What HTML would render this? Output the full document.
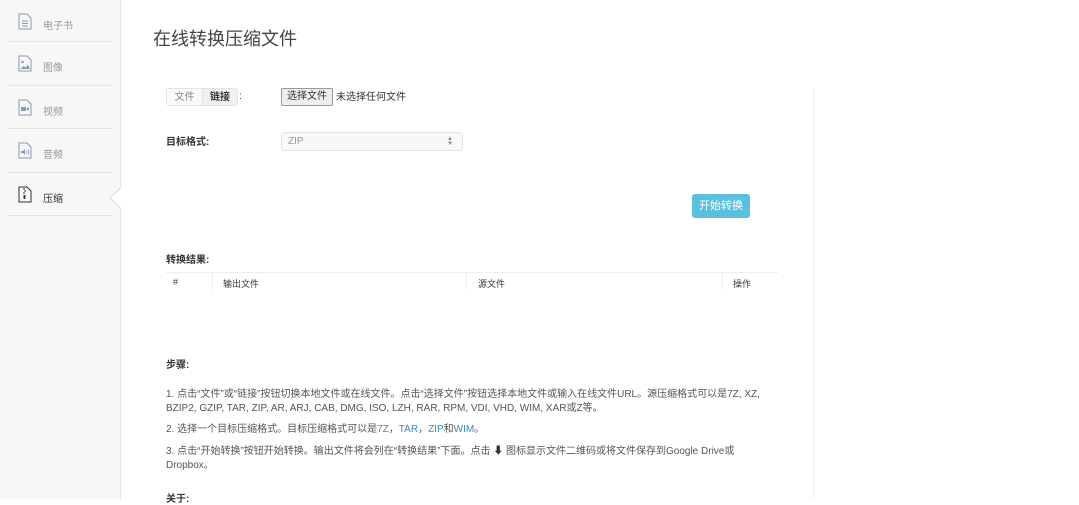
<!DOCTYPE html>
<html><head><meta charset="utf-8"><style>
*{margin:0;padding:0;box-sizing:border-box}
body{width:1079px;height:499px;overflow:hidden;background:#fff;font-family:"Liberation Sans","Noto Sans CJK SC",sans-serif;color:#333;position:relative}
.side{position:absolute;left:0;top:0;width:121px;height:499px;background:#f7f7f7;border-right:1px solid #e8e8e8}
.item{position:absolute;left:8px;width:104px;height:43px;border-bottom:1px solid #e3e3e3;font-size:10px;color:#999}
.item span{position:absolute;left:35px;top:17px}
.item svg{position:absolute;left:10px;top:13px}
.a{position:absolute;font-size:10px}
.arrow{position:absolute;left:113px;top:190px;width:16px;height:16px;background:#fff;border-left:1px solid #ddd;border-bottom:1px solid #ddd;transform:rotate(45deg)}
a{color:#3a8cc2;text-decoration:none}
.p{position:absolute;left:166px;width:598px;line-height:14px;color:#555;font-size:10px}
</style></head><body>
<div class="side">
 <div class="item" style="top:0;height:42px"><svg width="14" height="17" viewBox="0 0 14 17"><path d="M1 1h8l4 4v11H1z" fill="none" stroke="#8a9ab0"/><path d="M4 8h6M4 10.5h6M4 13h6" stroke="#8a9ab0"/></svg><span>电子书</span></div>
 <div class="item" style="top:42px;height:44px"><svg width="14" height="17" viewBox="0 0 14 17"><path d="M1 1h8l4 4v11H1z" fill="none" stroke="#8a9ab0"/><circle cx="4.5" cy="7" r="1.3" fill="#8a9ab0"/><path d="M2.5 14l3-3 2 1.5 2.5-3 2 4.5z" fill="#8a9ab0"/></svg><span>图像</span></div>
 <div class="item" style="top:86px;height:43px"><svg width="14" height="17" viewBox="0 0 14 17"><path d="M1 1h8l4 4v11H1z" fill="none" stroke="#8a9ab0"/><rect x="3" y="8" width="5" height="4" fill="#8a9ab0"/><path d="M8 10l3-2v4z" fill="#8a9ab0"/></svg><span>视频</span></div>
 <div class="item" style="top:129px;height:44px"><svg width="14" height="17" viewBox="0 0 14 17"><path d="M1 1h8l4 4v11H1z" fill="none" stroke="#8a9ab0"/><path d="M3 9h2l2-2v6l-2-2H3z" fill="#8a9ab0"/><path d="M8.5 8.5q1 1.5 0 3M10 7.5q2 2.5 0 5" fill="none" stroke="#8a9ab0" stroke-width=".8"/></svg><span>音频</span></div>
 <div class="item" style="top:173px;height:43px;color:#333"><svg width="14" height="17" viewBox="0 0 14 17"><path d="M1 1h8l4 4v11H1z" fill="none" stroke="#333"/><path d="M6 2v2M7 4v2M6 6v2" stroke="#333"/><path d="M5.5 9h2v3.5a1.5 1.5 0 0 1-2 0z" fill="#333"/></svg><span>压缩</span></div>
</div>
<div class="arrow"></div>
<div style="position:absolute;left:813px;top:88px;width:1px;height:411px;background:#eee"></div>
<div class="a" style="left:153px;top:25px;font-size:18px;color:#444">在线转换压缩文件</div>
<div style="position:absolute;left:166px;top:88px;height:18px;border:1px solid #e3e3e3;border-radius:3px;display:flex;font-size:10px;background:#f5f5f5">
 <div style="width:36px;text-align:center;line-height:17px;color:#888;background:#fafafa;border-right:1px solid #e3e3e3">文件</div>
 <div style="width:34px;text-align:center;line-height:17px;color:#333;font-weight:bold;background:#f0f0f0">链接</div>
</div>
<div class="a" style="left:239px;top:91px">:</div>
<div style="position:absolute;left:281px;top:88px;width:52px;height:18px;border:1px solid #999;background:#eee;border-radius:2px;font-size:10px;line-height:16px;text-align:center">选择文件</div>
<div class="a" style="left:336px;top:91px;line-height:13px">未选择任何文件</div>
<div class="a" style="left:166px;top:133px;font-weight:bold">目标格式:</div>
<div style="position:absolute;left:281px;top:132px;width:182px;height:19px;border:1px solid #e3e3e3;border-radius:4px;background:#f8f8f8;font-size:10px;color:#999;line-height:17px;padding-left:6px">ZIP<span style="position:absolute;right:9px;top:4px;font-size:6px;line-height:5px;color:#888">▲<br>▼</span></div>
<div style="position:absolute;left:692px;top:194px;width:58px;height:24px;background:#5bc0de;border-radius:3px;color:#fff;font-size:11px;text-align:center;line-height:24px">开始转换</div>
<div class="a" style="left:166px;top:251px;font-weight:bold">转换结果:</div>
<div style="position:absolute;left:166px;top:272px;width:612px;height:1px;background:#eee"></div>
<div style="position:absolute;left:212px;top:272px;width:1px;height:18px;background:#eee"></div>
<div style="position:absolute;left:466px;top:272px;width:1px;height:18px;background:#eee"></div>
<div style="position:absolute;left:722px;top:272px;width:1px;height:18px;background:#eee"></div>
<div class="a" style="left:173px;top:277px;font-size:9px">#</div>
<div class="a" style="left:223px;top:277px;font-size:9px">输出文件</div>
<div class="a" style="left:478px;top:277px;font-size:9px">源文件</div>
<div class="a" style="left:733px;top:277px;font-size:9px">操作</div>
<div class="a" style="left:166px;top:356px;font-weight:bold">步骤:</div>
<div class="p" style="top:388px">1. 点击“文件”或“链接”按钮切换本地文件或在线文件。点击“选择文件”按钮选择本地文件或输入在线文件URL。源压缩格式可以是7Z, XZ,<br>BZIP2, GZIP, TAR, ZIP, AR, ARJ, CAB, DMG, ISO, LZH, RAR, RPM, VDI, VHD, WIM, XAR或Z等。</div>
<div class="p" style="top:423px">2. 选择一个目标压缩格式。目标压缩格式可以是<a>7Z</a>，<a>TAR</a>，<a>ZIP</a>和<a>WIM</a>。</div>
<div class="p" style="top:445px">3. 点击“开始转换”按钮开始转换。输出文件将会列在“转换结果”下面。点击 <b style="color:#333">⬇</b> 图标显示文件二维码或将文件保存到Google Drive或<br>Dropbox。</div>
<div class="a" style="left:166px;top:490px;font-weight:bold">关于:</div>
</body></html>
